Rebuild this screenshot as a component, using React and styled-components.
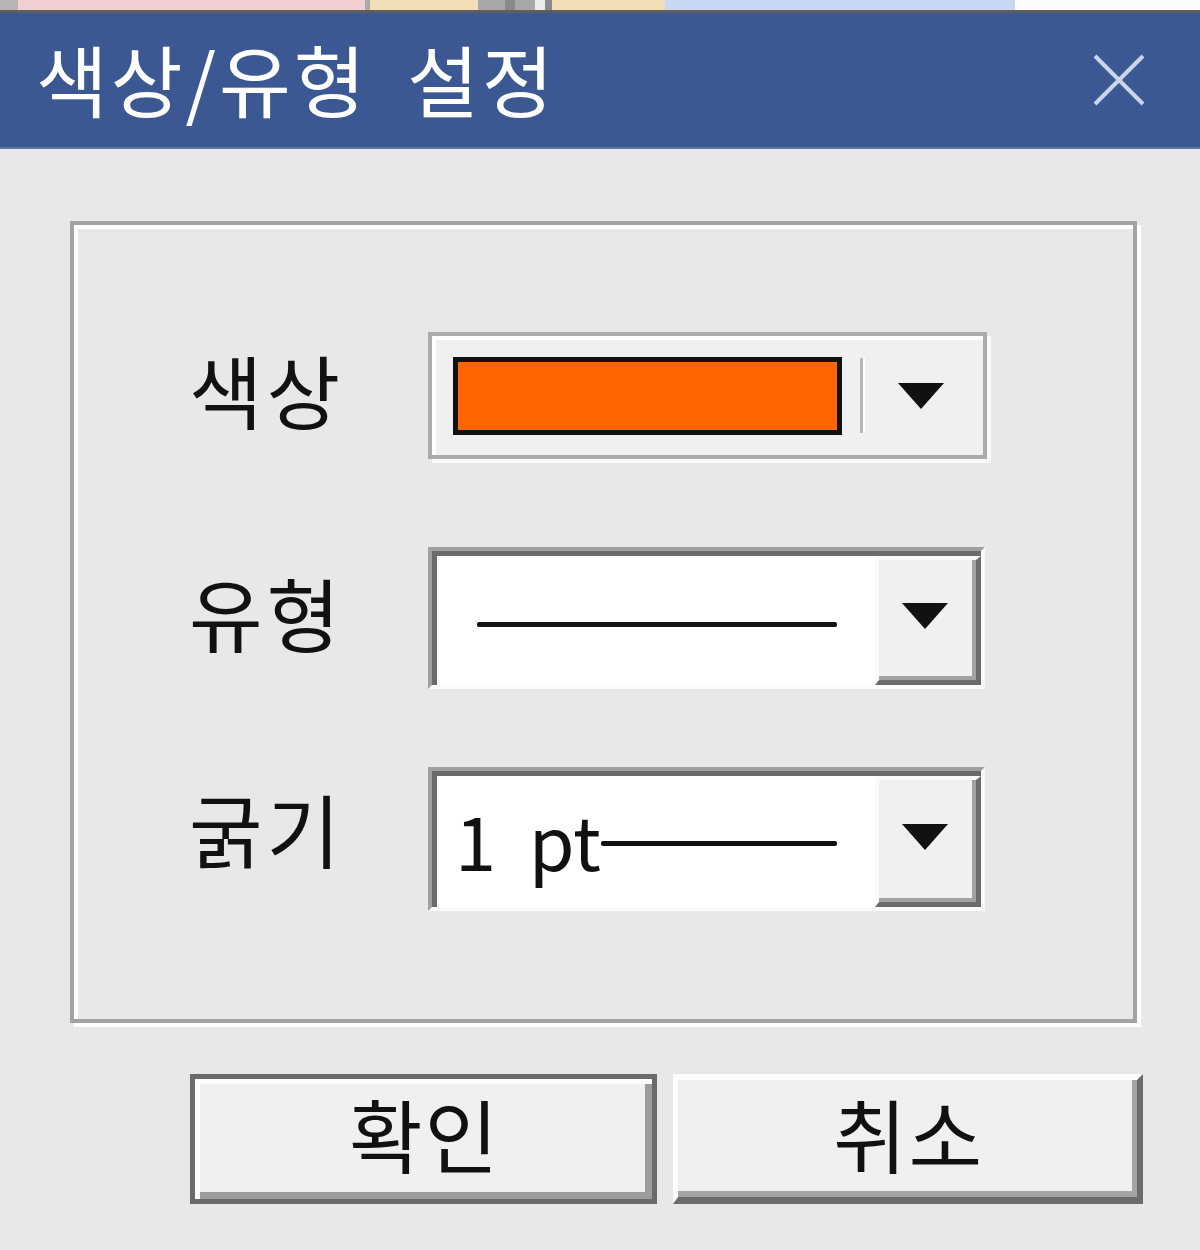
import React from "react";
import styled, { createGlobalStyle, css } from "styled-components";

const Global = createGlobalStyle`
  html, body { margin: 0; padding: 0; background: #e8e8e8; }
  body { font-family: "Noto Sans CJK KR", "Noto Sans", sans-serif; }
  * { box-sizing: border-box; }
`;

const Screen = styled.div`
  width: 1200px;
  height: 1250px;
  background: #e8e8e8;
  display: flex;
  flex-direction: column;
  overflow: hidden;
`;

const TopStrip = styled.div`
  display: flex;
  height: 13px;
  border-bottom: 3px solid #5e5e5e;
`;

const Segment = styled.div`
  width: ${(p) => p.$w}px;
  background: ${(p) => p.$bg};
  flex: none;
`;

const TitleBar = styled.div`
  height: 136px;
  background: #3b5893;
  display: flex;
  align-items: center;
  justify-content: space-between;
  padding: 0 54px 0 36px;
  border-bottom: 2px solid #5f74a3;
`;

const Title = styled.div`
  color: #ffffff;
  font-size: 78px;
  line-height: 1;
  font-weight: 400;
  white-space: pre;
  letter-spacing: 3px;
  word-spacing: 18px;
  margin-top: -4px;
`;

const CloseIcon = styled.svg`
  width: 54px;
  height: 54px;
  display: block;
`;

const Body = styled.div`
  padding: 72px 57px 0 70px;
  display: flex;
  flex-direction: column;
`;

const GroupBox = styled.div`
  height: 802px;
  width: 1067px;
  border: 4px solid #a3a3a3;
  box-shadow: inset 4px 4px 0 #ffffff, 4px 4px 0 #ffffff;
  padding: 107px 0 0 115px;
  display: flex;
  flex-direction: column;
`;

const Row = styled.div`
  display: flex;
  align-items: center;
  margin-top: ${(p) => p.$top || 0}px;
  height: ${(p) => p.$h}px;
`;

const Label = styled.div`
  width: 239px;
  flex: none;
  font-size: 80px;
  line-height: 1;
  color: #111111;
  letter-spacing: 4px;
  margin-top: ${(p) => p.$shift || 0}px;
`;

const FlatCombo = styled.div`
  width: 559px;
  height: 127px;
  background: #f0f0f0;
  border: 4px solid #ababab;
  box-shadow: inset 4px 4px 0 #ffffff, 4px 4px 0 #fafafa;
  display: flex;
  align-items: center;
  padding: 0 0 0 21px;
`;

const Swatch = styled.div`
  width: 389px;
  height: 78px;
  background: ${(p) => p.$color};
  border: 5px solid #111111;
  flex: none;
`;

const Separator = styled.div`
  width: 3px;
  height: 75px;
  background: #b8b8b8;
  box-shadow: 2px 0 0 #ffffff;
  margin-left: 18px;
  flex: none;
`;

const Arrow = styled.svg`
  width: 46px;
  height: 26px;
  display: block;
  flex: none;
  margin-left: ${(p) => p.$ml || 0}px;
`;

const SunkenCombo = styled.div`
  width: 557px;
  height: ${(p) => p.$h}px;
  border-top: 4px solid #a0a0a0;
  border-left: 4px solid #a0a0a0;
  border-right: 4px solid #fbfbfb;
  border-bottom: 4px solid #fbfbfb;
  box-shadow: inset 5px 5px 0 #6b6b6b;
  background: #ffffff;
  padding: 5px 0 0 5px;
  display: flex;
`;

const Field = styled.div`
  flex: 1;
  display: flex;
  align-items: center;
  padding-left: ${(p) => p.$pl}px;
  padding-right: 38px;
`;

const StrokeLine = styled.div`
  height: 5px;
  background: #111111;
  border-radius: 2px;
  flex: ${(p) => (p.$grow ? 1 : "none")};
  margin-top: ${(p) => p.$mt || 0}px;
`;

const FieldText = styled.span`
  font-size: 74px;
  line-height: 1;
  color: #111111;
  word-spacing: 16px;
  flex: none;
  margin-top: -6px;
`;

const DropButton = styled.div`
  width: 106px;
  flex: none;
  background: #f0f0f0;
  border-top: 4px solid #fafafa;
  border-left: 4px solid #fafafa;
  border-right: 5px solid #6c6c6c;
  border-bottom: 5px solid #6c6c6c;
  box-shadow: inset -4px -4px 0 #a2a2a2;
  display: flex;
  align-items: center;
  justify-content: center;
  padding: 0 6px 8px 0;
`;

const ButtonRow = styled.div`
  display: flex;
  gap: 16px;
  margin-top: 51px;
  padding-left: 120px;
`;

const buttonBase = css`
  height: 130px;
  flex: none;
  background: #f0f0f0;
  font-family: "Noto Sans CJK KR", "Noto Sans", sans-serif;
  font-size: 80px;
  line-height: 1;
  color: #111111;
  letter-spacing: 2px;
  display: flex;
  align-items: center;
  justify-content: center;
  padding: 0 0 14px 2px;
  cursor: default;
`;

const DefaultButton = styled.button`
  ${buttonBase}
  width: 467px;
  border: 5px solid #6a6a6a;
  box-shadow: inset 5px 5px 0 #fcfcfc, inset -7px -7px 0 #9c9c9c;
`;

const PlainButton = styled.button`
  ${buttonBase}
  width: 470px;
  border-top: 6px solid #ffffff;
  border-left: 5px solid #ffffff;
  border-right: 6px solid #6c6c6c;
  border-bottom: 7px solid #6c6c6c;
  box-shadow: inset -5px -6px 0 #a4a4a4;
`;

const segments = [
  [18, "#b8b4b6"],
  [347, "#f1cfd0"],
  [5, "#a9a9a9"],
  [108, "#f2dfb6"],
  [27, "#a7a7a7"],
  [10, "#8a8a8a"],
  [20, "#a7a7a7"],
  [10, "#ececec"],
  [7, "#8a8a8a"],
  [113, "#f2dfb6"],
  [350, "#c8d8f2"],
  [185, "#fbfbfb"],
];

function DownArrow({ ml }) {
  return (
    <Arrow viewBox="0 0 46 26" $ml={ml}>
      <polygon points="0,0 46,0 23,26" fill="#111111" />
    </Arrow>
  );
}

export default function App() {
  return (
    <>
      <Global />
      <Screen>
        <TopStrip>
          {segments.map(([w, bg], i) => (
            <Segment key={i} $w={w} $bg={bg} />
          ))}
        </TopStrip>
        <TitleBar>
          <Title>색상/유형 설정</Title>
          <CloseIcon viewBox="0 0 54 54">
            <path
              d="M3 3 L51 51 M51 3 L3 51"
              stroke="#cdd5e6"
              strokeWidth="4"
              fill="none"
            />
          </CloseIcon>
        </TitleBar>
        <Body>
          <GroupBox>
            <Row $h={127}>
              <Label $shift={-16}>색상</Label>
              <FlatCombo>
                <Swatch $color="#ff6600" />
                <Separator />
                <DownArrow ml={35} />
              </FlatCombo>
            </Row>
            <Row $top={88} $h={142}>
              <Label $shift={-14}>유형</Label>
              <SunkenCombo $h={142}>
                <Field $pl={40}>
                  <StrokeLine $grow $mt={8} />
                </Field>
                <DropButton>
                  <DownArrow />
                </DropButton>
              </SunkenCombo>
            </Row>
            <Row $top={78} $h={144}>
              <Label $shift={-24}>굵기</Label>
              <SunkenCombo $h={144}>
                <Field $pl={18}>
                  <FieldText>1 pt</FieldText>
                  <StrokeLine $grow $mt={4} />
                </Field>
                <DropButton>
                  <DownArrow />
                </DropButton>
              </SunkenCombo>
            </Row>
          </GroupBox>
          <ButtonRow>
            <DefaultButton>확인</DefaultButton>
            <PlainButton>취소</PlainButton>
          </ButtonRow>
        </Body>
      </Screen>
    </>
  );
}
